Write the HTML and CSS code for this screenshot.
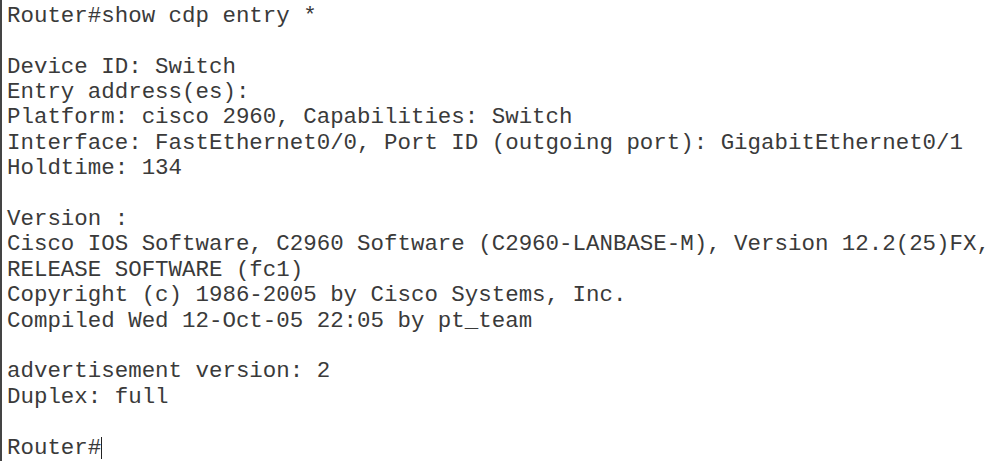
FILE: index.html
```html
<!DOCTYPE html>
<html>
<head>
<meta charset="utf-8">
<link rel="stylesheet" href="styles.css">
</head>
<body>
<div class="term"><pre class="out">Router#show cdp entry *

Device ID: Switch
Entry address(es):
Platform: cisco 2960, Capabilities: Switch
Interface: FastEthernet0/0, Port ID (outgoing port): GigabitEthernet0/1
Holdtime: 134

Version :
Cisco IOS Software, C2960 Software (C2960-LANBASE-M), Version 12.2(25)FX,
RELEASE SOFTWARE (fc1)
Copyright (c) 1986-2005 by Cisco Systems, Inc.
Compiled Wed 12-Oct-05 22:05 by pt_team

advertisement version: 2
Duplex: full

Router#<span class="cursor"></span></pre></div>
</body>
</html>
```
FILE: styles.css
```css
html, body {
  margin: 0;
  padding: 0;
  background: #fff;
}
.term {
  height: 461px;
  border-left: 2px solid #444;
  box-sizing: border-box;
  padding: 3.7px 0 0 5px;
}
.out {
  margin: 0;
  font-family: "Liberation Mono", "Courier New", monospace;
  font-size: 22.45px;
  line-height: 25.4px;
  color: #3a3a3a;
  white-space: pre;
}
.cursor {
  display: inline-block;
  width: 1px;
  height: 22px;
  background: #222;
  vertical-align: -5px;
}
```
